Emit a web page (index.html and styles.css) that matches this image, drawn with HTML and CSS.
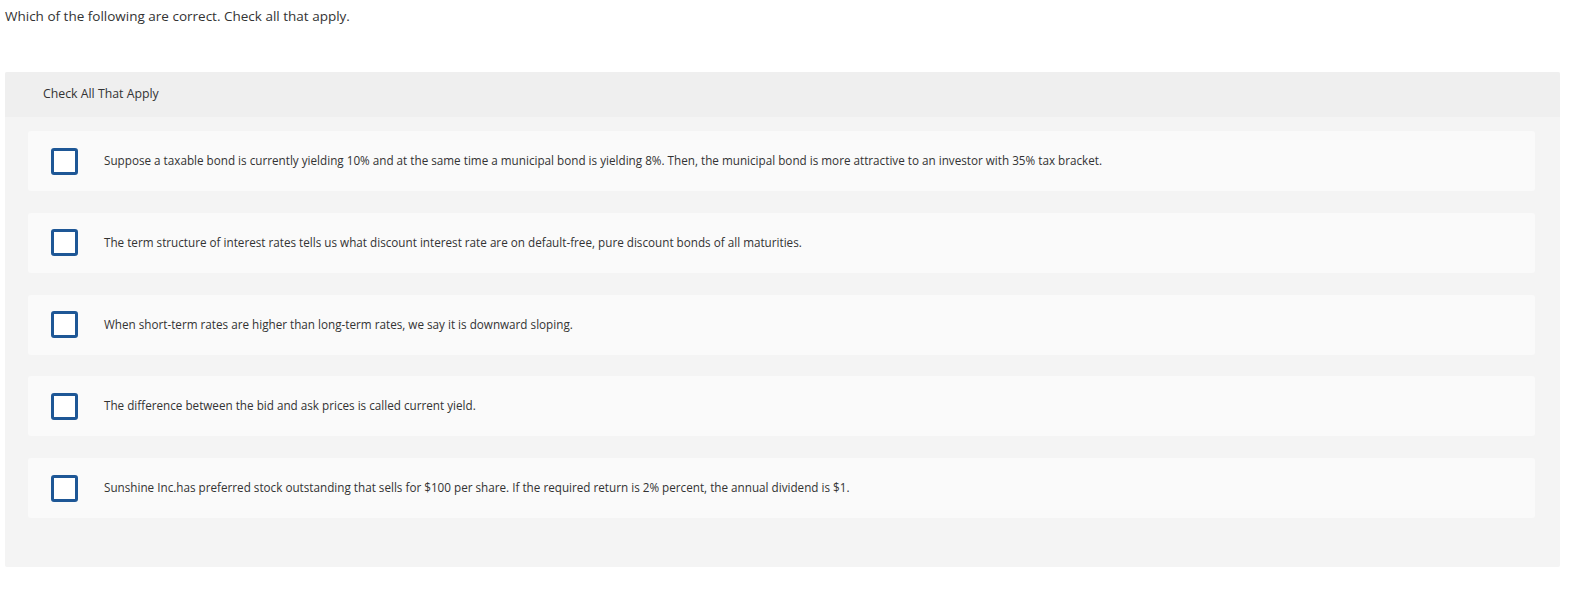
FILE: index.html
```html
<!DOCTYPE html>
<html>
<head>
<meta charset="utf-8">
<link rel="stylesheet" href="styles.css">
</head>
<body>
<div class="page">
  <p class="prompt">Which of the following are correct. Check all that apply.</p>
  <div class="panel">
    <div class="panel-head">Check All That Apply</div>
    <div class="panel-body">
      <label class="choice"><span class="box"></span><span class="text">Suppose a taxable bond is currently yielding 10% and at the same time a municipal bond is yielding 8%. Then, the municipal bond is more attractive to an investor with 35% tax bracket.</span></label>
      <label class="choice"><span class="box"></span><span class="text">The term structure of interest rates tells us what discount interest rate are on default-free, pure discount bonds of all maturities.</span></label>
      <label class="choice"><span class="box"></span><span class="text">When short-term rates are higher than long-term rates, we say it is downward sloping.</span></label>
      <label class="choice"><span class="box"></span><span class="text">The difference between the bid and ask prices is called current yield.</span></label>
      <label class="choice"><span class="box"></span><span class="text">Sunshine Inc.has preferred stock outstanding that sells for $100 per share. If the required return is 2% percent, the annual dividend is $1.</span></label>
    </div>
  </div>
</div>
</body>
</html>
```
FILE: styles.css
```css
* { box-sizing: border-box; }
body {
  margin: 0;
  background: #fff;
  font-family: "Open Sans", "Lato", sans-serif;
  color: #333;
}
.page {
  padding: 0 27px 0 5px;
}
.prompt {
  margin: 0;
  padding-top: 7px;
  font-size: 13.5px;
  line-height: 18px;
  height: 72px;
}
.panel {
  background: #f4f4f4;
  border-radius: 2px;
  overflow: hidden;
}
.panel-head {
  background: #efefef;
  height: 45px;
  padding: 14px 0 0 38px;
  font-size: 12.3px;
  line-height: 16px;
  color: #333;
}
.panel-body {
  padding: 14px 25px 49px 23px;
  display: flex;
  flex-direction: column;
  gap: 21.75px;
}
.choice {
  background: #fafafa;
  border-radius: 3px;
  height: 60px;
  display: flex;
  align-items: center;
  padding-left: 23px;
}
.box {
  width: 27px;
  height: 27px;
  border: 3px solid #1e5796;
  border-radius: 3px;
  background: #fff;
  flex: none;
}
.text {
  margin-left: 26px;
  margin-bottom: 2px;
  font-size: 11.7px;
  color: #333;
}
```
